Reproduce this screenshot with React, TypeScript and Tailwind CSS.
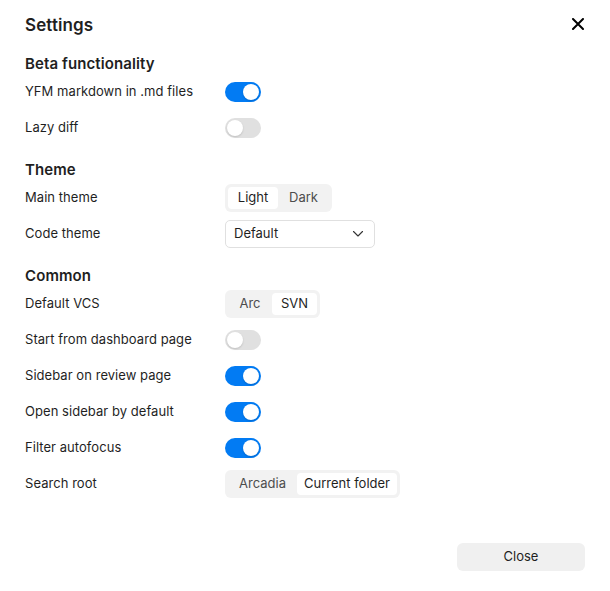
import React from "react";

const font = { fontFamily: "Inter, 'Noto Sans', sans-serif" };

function Switch({ on }: { on: boolean }) {
  return (
    <div
      className={
        "relative w-[36px] h-[20px] rounded-full " +
        (on ? "bg-[#027bf3]" : "bg-[#e0e0e0]")
      }
    >
      <div
        className={
          "absolute top-[2px] w-[16px] h-[16px] rounded-full bg-white shadow-[0_1px_2px_rgba(0,0,0,0.15)] " +
          (on ? "left-[18px]" : "left-[2px]")
        }
      />
    </div>
  );
}

function Segmented({ items, active }: { items: { label: string; w: number }[]; active: number }) {
  return (
    <div className="flex h-[28px] p-[3px] rounded-[6px] bg-[#f2f2f2]">
      {items.map((it, i) => (
        <div
          key={it.label}
          style={{ width: it.w }}
          className={
            "flex items-center justify-center h-[22px] rounded-[4px] text-[13px] " +
            (i === active ? "bg-white text-[#1f1f1f]" : "text-[#4d4d4d]")
          }
        >
          {it.label}
        </div>
      ))}
    </div>
  );
}

function Row({ label, children }: { label: string; children: React.ReactNode }) {
  return (
    <div className="flex items-center h-[36px]">
      <div className="w-[200px] text-[13px] tracking-[0.05px] text-[#1f1f1f]">{label}</div>
      <div className="flex items-center">{children}</div>
    </div>
  );
}

function Header({ children, first }: { children: React.ReactNode; first?: boolean }) {
  return (
    <div
      className={
        "h-[20px] flex items-center text-[15px] font-semibold tracking-[0.1px] text-[#1f1f1f] " +
        (first ? "mt-[18px]" : "mt-[14px]")
      }
    >
      {children}
    </div>
  );
}

export default function App() {
  return (
    <div style={font} className="w-[610px] h-[591px] bg-white relative">
      <div className="px-[25px] pt-[12px] flex flex-col">
        <div className="flex items-center justify-between h-[24px]">
          <div className="text-[17px] font-semibold tracking-[0.1px] text-[#1f1f1f] leading-[24px] pt-[1px]">Settings</div>
          <svg width="12" height="12" viewBox="0 0 12 12" className="mr-[1px]">
            <path d="M1 1 L11 11 M11 1 L1 11" stroke="#000" strokeWidth="2" strokeLinecap="round" />
          </svg>
        </div>

        <Header first>Beta functionality</Header>
        <Row label="YFM markdown in .md files">
          <Switch on />
        </Row>
        <Row label="Lazy diff">
          <Switch on={false} />
        </Row>

        <Header>Theme</Header>
        <Row label="Main theme">
          <Segmented items={[{ label: "Light", w: 50 }, { label: "Dark", w: 51 }]} active={0} />
        </Row>
        <Row label="Code theme">
          <div className="w-[150px] h-[28px] rounded-[5px] border border-[#e0e0e0] flex items-center justify-between pl-[8px] pr-[10px] text-[13px] text-[#1f1f1f]">
            <span>Default</span>
            <svg width="12" height="8" viewBox="0 0 12 8">
              <path d="M1.5 1.5 L6 6 L10.5 1.5" stroke="#333" strokeWidth="1.1" fill="none" strokeLinecap="round" strokeLinejoin="round" />
            </svg>
          </div>
        </Row>

        <Header>Common</Header>
        <Row label="Default VCS">
          <Segmented items={[{ label: "Arc", w: 44 }, { label: "SVN", w: 45 }]} active={1} />
        </Row>
        <Row label="Start from dashboard page">
          <Switch on={false} />
        </Row>
        <Row label="Sidebar on review page">
          <Switch on />
        </Row>
        <Row label="Open sidebar by default">
          <Switch on />
        </Row>
        <Row label="Filter autofocus">
          <Switch on />
        </Row>
        <Row label="Search root">
          <Segmented items={[{ label: "Arcadia", w: 69 }, { label: "Current folder", w: 100 }]} active={1} />
        </Row>

        <div className="flex justify-end mt-[41px]">
          <div className="w-[128px] h-[28px] rounded-[6px] bg-[#f0f0f0] flex items-center justify-center text-[13px] text-[#1f1f1f]">
            Close
          </div>
        </div>
      </div>
    </div>
  );
}
